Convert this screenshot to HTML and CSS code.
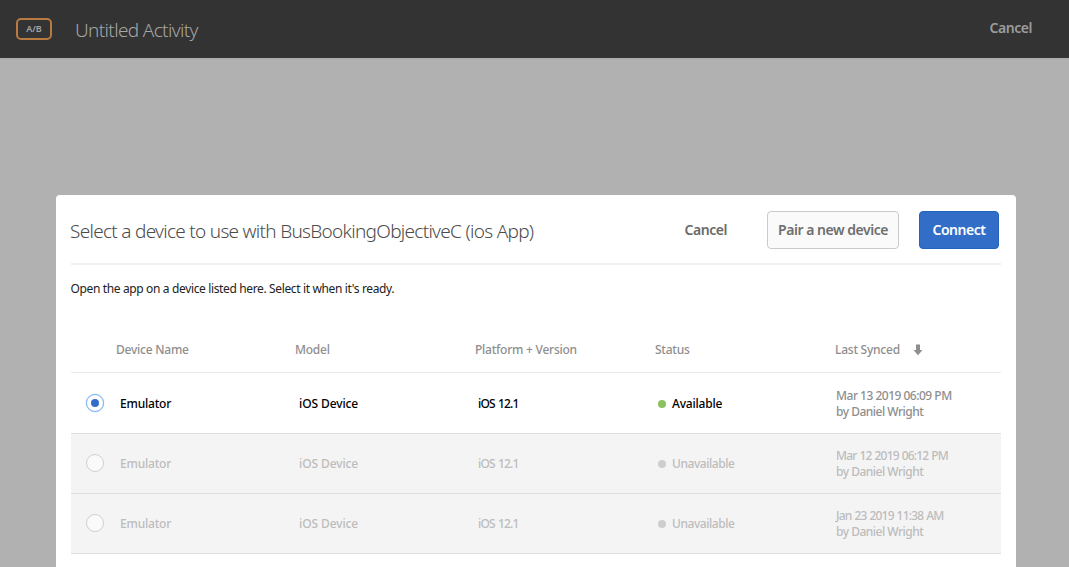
FILE: index.html
```
<!DOCTYPE html>
<html lang="en">
<head>
<meta charset="utf-8">
<title>Untitled Activity</title>
<link rel="stylesheet" href="styles.css">
</head>
<body>
<header class="topbar">
  <span class="badge">A/B</span>
  <h1 class="activity">Untitled Activity</h1>
  <button class="quiet topbar-cancel">Cancel</button>
</header>
<main class="dialog">
  <div class="dialog-head">
    <h2 class="title">Select a device to use with BusBookingObjectiveC (ios App)</h2>
    <button class="quiet">Cancel</button>
    <button class="button pair">Pair a new device</button>
    <button class="button primary">Connect</button>
  </div>
  <p class="hint">Open the app on a device listed here. Select it when it's ready.</p>
  <div class="table">
    <div class="row head">
      <span></span><span>Device Name</span><span>Model</span><span>Platform + Version</span><span>Status</span>
      <span class="sort">Last Synced<svg width="10" height="12" viewBox="0 0 10 12"><path d="M3 0.5h4v5.5h2.5L5 11.2 0.5 6H3z" fill="#8e8e8e"/></svg></span>
    </div>
    <div class="row first">
      <span class="radio on"></span>
      <span class="name">Emulator</span>
      <span class="model">iOS Device</span>
      <span class="version">iOS 12.1</span>
      <span class="status"><i class="dot"></i>Available</span>
      <span class="synced">Mar 13 2019 06:09 PM<br>by Daniel Wright</span>
    </div>
    <div class="row off">
      <span class="radio"></span>
      <span class="name">Emulator</span>
      <span class="model">iOS Device</span>
      <span class="version">iOS 12.1</span>
      <span class="status"><i class="dot"></i>Unavailable</span>
      <span class="synced"><span class="tight">Mar 12 2019 06:12 PM</span><br>by Daniel Wright</span>
    </div>
    <div class="row off">
      <span class="radio"></span>
      <span class="name">Emulator</span>
      <span class="model">iOS Device</span>
      <span class="version">iOS 12.1</span>
      <span class="status"><i class="dot"></i>Unavailable</span>
      <span class="synced"><span class="tight">Jan 23 2019 11:38 AM</span><br>by Daniel Wright</span>
    </div>
  </div>
</main>
</body>
</html>
```
FILE: styles.css
```
* { box-sizing: border-box; }
body {
  margin: 0;
  height: 567px;
  overflow: hidden;
  background: #b1b1b1;
  font-family: "Noto Sans", "Open Sans", sans-serif;
  font-size: 12px;
  color: #000;
}
button { font-family: inherit; padding: 0; cursor: pointer; }
.topbar {
  display: flex;
  align-items: center;
  height: 58px;
  padding: 0 37px 0 16px;
  background: #333;
  box-shadow: 0 2px 0 #adadad;
}
.badge {
  display: flex;
  align-items: center;
  justify-content: center;
  width: 36px;
  height: 22px;
  padding-bottom: 1px;
  border: 2px solid #b97a42;
  border-radius: 5px;
  color: #a3a3a3;
  font-size: 9px;
  font-weight: 600;
}
.activity {
  flex: 1;
  margin: 1px 0 0 23px;
  color: #a6a6a6;
  font-size: 19px;
  font-weight: 350;
  line-height: 28px;
  letter-spacing: -0.65px;
}
.quiet {
  border: 0;
  background: none;
  color: #6a6a6a;
  font-size: 14px;
  font-weight: 600;
  letter-spacing: -0.47px;
}
.dialog .quiet { padding-bottom: 2px; }
.topbar-cancel { margin-bottom: 3px; color: #9c9c9c; }
.dialog {
  width: 960px;
  height: 372px;
  margin: 137px 0 0 56px;
  padding: 0 15px;
  border-radius: 4px 4px 0 0;
  background: #fff;
}
.dialog-head {
  display: flex;
  align-items: center;
  height: 70px;
  padding-top: 2px;
  border-bottom: 2px solid #efefef;
}
.title {
  flex: 1;
  margin: 2px 0 0 -1px;
  color: #4b4b4b;
  font-size: 19px;
  font-weight: 300;
  letter-spacing: -0.71px;
  white-space: nowrap;
}
.button {
  height: 38px;
  padding-bottom: 2px;
  border: 1px solid #cacaca;
  border-radius: 4px;
  background: #fafafa;
  color: #6e6e6e;
  font-size: 14px;
  font-weight: 600;
  letter-spacing: -0.47px;
}
.pair { width: 132px; margin: 0 20px 0 40px; }
.primary { width: 80px; margin-right: 2px; border-color: #2362bd; background: #326ec8; color: #fff; }
.hint { margin: 15px 0 0 -0.5px; line-height: 18px; letter-spacing: -0.36px; color: #222; }
.table { margin-top: 29px; }
.row {
  display: grid;
  grid-template-columns: 45px 179px 180px 180px 180px 166px;
  align-items: center;
  height: 60px;
  border-bottom: 1px solid #dedede;
  font-weight: 500;
  letter-spacing: -0.2px;
}
.row.first { height: 61px; }
.row.head { height: 46px; border-color: #e8e8e8; color: #8e8e8e; letter-spacing: -0.24px; }
.row.off { background: #f4f4f4; color: #bcbcbc; }
.radio {
  display: flex;
  align-items: center;
  justify-content: center;
  width: 18px;
  height: 18px;
  margin-left: 15px;
  border: 1px solid #d0d0d0;
  border-radius: 50%;
  background: #fafafa;
}
.off .radio { margin-bottom: 1px; }
.radio.on { border-color: #7db5f5; background: #fff; box-shadow: 0 0 1px #7db5f5; }
.radio.on::after { content: ""; width: 8px; height: 8px; border-radius: 50%; background: #326ec8; }
.name, .model { padding-left: 4px; }
.model { letter-spacing: -0.1px; }
.version { padding-left: 3px; letter-spacing: -0.85px; word-spacing: 1px; }
.status { display: flex; align-items: center; gap: 6px; padding-left: 3px; }
.off .status { letter-spacing: -0.45px; }
.dot { width: 8px; height: 8px; margin-top: 1px; border-radius: 50%; background: #8bc25f; }
.off .dot { background: #cecece; }
.sort { display: flex; align-items: center; gap: 13px; }
.synced { padding-left: 1px; color: #8e8e8e; line-height: 16px; letter-spacing: -0.5px; }
.first .synced { padding-top: 1px; }
.off .synced { color: #bcbcbc; }
.tight { letter-spacing: -0.8px; word-spacing: 0.6px; }
```
